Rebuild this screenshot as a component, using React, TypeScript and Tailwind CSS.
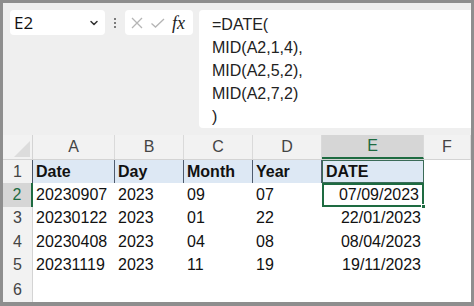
import { ChevronDown } from "lucide-react";

const cols = [
  { key: "A", w: "w-[82px]" },
  { key: "B", w: "w-[69px]" },
  { key: "C", w: "w-[69px]" },
  { key: "D", w: "w-[69px]" },
  { key: "E", w: "w-[102px]" },
  { key: "F", w: "flex-1" },
];

const rows = [
  ["20230907", "2023", "09", "07", "07/09/2023"],
  ["20230122", "2023", "01", "22", "22/01/2023"],
  ["20230408", "2023", "04", "08", "08/04/2023"],
  ["20231119", "2023", "11", "19", "19/11/2023"],
];

const heads = ["Date", "Day", "Month", "Year", "DATE"];

export default function App() {
  return (
    <div
      className="w-[474px] h-[306px] overflow-hidden bg-[#efefef] border-t-[3px] border-l-[3px] border-r-[3px] border-b-[4px] border-[#8e8e8e] flex flex-col text-[#111]"
      style={{ fontFamily: '"Liberation Sans", Arial, sans-serif' }}
    >
      {/* formula bar area */}
      <div className="flex items-start pl-[7px] pt-[7px] h-[132px] shrink-0">
        <div className="w-[95px] h-[25px] bg-white rounded-[4px] flex items-center justify-between pl-[4px] pr-[5px]">
          <span className="text-[17px] font-['Open_Sans'] leading-none">E2</span>
          <ChevronDown size={12} strokeWidth={3} className="text-[#333]" />
        </div>
        <div className="w-[20px] h-[25px] flex flex-col items-center justify-center gap-[2px]">
          <span className="w-[2px] h-[2px] bg-[#555] rounded-full" />
          <span className="w-[2px] h-[2px] bg-[#555] rounded-full" />
          <span className="w-[2px] h-[2px] bg-[#555] rounded-full" />
        </div>
        <div className="w-[68px] h-[25px] bg-white rounded-[4px] flex items-center pl-[5px] gap-[6px]">
          <svg width="14" height="14" viewBox="0 0 14 14">
            <path d="M2 2 L12 12 M12 2 L2 12" stroke="#b5b5b5" strokeWidth="1.3" fill="none" />
          </svg>
          <svg width="16" height="14" viewBox="0 0 16 14">
            <path d="M1.5 7.5 L5.5 11 L14 3" stroke="#b5b5b5" strokeWidth="1.3" fill="none" />
          </svg>
          <span className="text-[18px] italic leading-none text-[#222] font-['Liberation_Serif']">fx</span>
        </div>
        <div className="ml-[6px] flex-1 h-[118px] bg-white rounded-l-[4px] pl-[13px] pt-[3px] text-[16px] leading-[23px] text-[#222]">
          <div>=DATE(</div>
          <div>MID(A2,1,4),</div>
          <div>MID(A2,5,2),</div>
          <div>MID(A2,7,2)</div>
          <div>)</div>
        </div>
      </div>

      {/* sheet */}
      <div className="flex-1 bg-white flex flex-col">
        {/* column headers */}
        <div className="flex h-[25px] bg-[#f2f2f2] border-b border-[#d4d4d4]">
          <div className="w-[30px] relative border-r border-[#d4d4d4]">
            <svg className="absolute right-[2px] bottom-[2px]" width="16" height="16" viewBox="0 0 16 16">
              <path d="M16 0 L16 16 L0 16 Z" fill="#dcdcdc" />
            </svg>
          </div>
          {cols.map((c) => (
            <div
              key={c.key}
              className={`${c.w} flex items-center justify-center text-[16px] border-r border-[#dadada] ${
                c.key === "E"
                  ? "bg-[#d6d6d6] text-[#1e6b41] border-b-2 border-b-[#1e6b41]"
                  : "text-[#444]"
              }`}
            >
              {c.key}
            </div>
          ))}
        </div>

        {/* header row 1 */}
        <div className="flex h-[23px]">
          <div className="w-[30px] bg-[#f2f2f2] border-r border-[#4a5566] flex items-center justify-center text-[16px] text-[#444]">
            1
          </div>
          {heads.map((h, i) => (
            <div
              key={h}
              className={`${cols[i].w} bg-[#dde8f4] font-bold text-[16px] flex items-center pl-[3px] ${
                i === 4 ? "border border-[#3b6b58]" : "border-r border-[#4f5c6e]"
              }`}
            >
              {h}
            </div>
          ))}
          <div className="flex-1" />
        </div>

        {rows.map((r, ri) => (
          <div key={ri} className="flex h-[23.5px]">
            <div
              className={`w-[30px] flex items-center justify-center text-[16px] border-r ${
                ri === 0
                  ? "bg-[#d6d6d6] text-[#1e6b41] border-[#1e6b41] border-r-2"
                  : "bg-[#f2f2f2] text-[#444] border-[#d4d4d4]"
              }`}
            >
              {ri + 2}
            </div>
            {r.map((v, ci) => (
              <div
                key={ci}
                className={`${cols[ci].w} text-[16px] flex items-center ${
                  ci === 4 ? "justify-end pr-[3px]" : "pl-[3px]"
                } ${ci === 4 && ri === 0 ? "relative border-2 border-[#1e6b41]" : ""}`}
              >
                {v}
                {ci === 4 && ri === 0 && (
                  <span className="absolute right-[-4px] bottom-[-4px] w-[5px] h-[5px] bg-[#1e6b41] border border-white" />
                )}
              </div>
            ))}
            <div className="flex-1" />
          </div>
        ))}

        <div className="flex flex-1">
          <div className="w-[30px] bg-[#f2f2f2] border-r border-[#d4d4d4] flex items-center justify-center text-[16px] text-[#444]">
            6
          </div>
          <div className="flex-1" />
        </div>
      </div>
    </div>
  );
}
